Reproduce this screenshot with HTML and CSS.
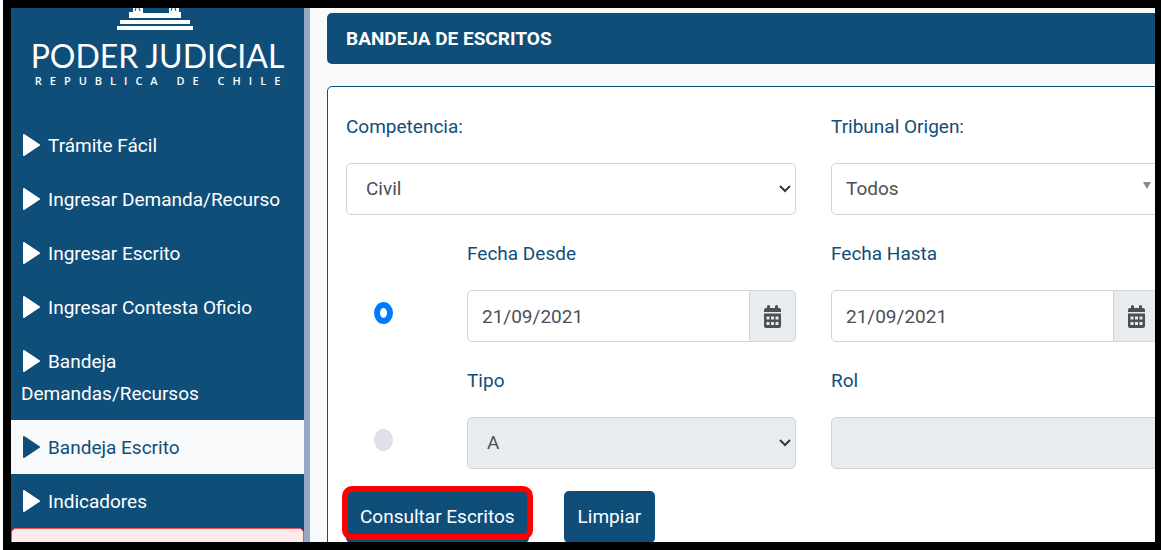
FILE: index.html
```html
<!DOCTYPE html>
<html lang="es">
<head>
    <meta charset="UTF-8">
    <meta name="viewport" content="width=device-width, initial-scale=1.0">
    <title>Bandeja de Escritos</title>
    <link rel="stylesheet" href="styles.css">
</head>
<body>
    <div class="frame">
        <aside class="sidebar">
            <div class="logo">
                <svg class="logo-building" viewBox="0 0 76 24" aria-hidden="true">
                    <path d="M16 0h10v5h26V0h10v4h2v6H12V4h4z" fill="#fff"/>
                    <path d="M19 0l-1 3M22 0l1 3M55 0l-1 3M58 0l1 3" stroke="#104e7a"/>
                    <path d="M3 12h70v4H3zM0 18h76v4H0z" fill="#fff"/>
                </svg>
                <div class="logo-name">PODER JUDICIAL</div>
                <div class="logo-country">REPUBLICA DE CHILE</div>
            </div>
            <nav class="menu">
                <a href="#"><svg class="arrow" viewBox="0 0 17 22"><path d="M1 1l15 10L1 21z"/></svg>Trámite Fácil</a>
                <a href="#"><svg class="arrow" viewBox="0 0 17 22"><path d="M1 1l15 10L1 21z"/></svg>Ingresar Demanda/Recurso</a>
                <a href="#"><svg class="arrow" viewBox="0 0 17 22"><path d="M1 1l15 10L1 21z"/></svg>Ingresar Escrito</a>
                <a href="#"><svg class="arrow" viewBox="0 0 17 22"><path d="M1 1l15 10L1 21z"/></svg>Ingresar Contesta Oficio</a>
                <a href="#"><svg class="arrow" viewBox="0 0 17 22"><path d="M1 1l15 10L1 21z"/></svg>Bandeja<br>Demandas/Recursos</a>
                <a href="#" class="active"><svg class="arrow" viewBox="0 0 17 22"><path d="M1 1l15 10L1 21z"/></svg>Bandeja Escrito</a>
                <a href="#"><svg class="arrow" viewBox="0 0 17 22"><path d="M1 1l15 10L1 21z"/></svg>Indicadores</a>
            </nav>
            <div class="alert"></div>
        </aside>

        <main class="content">
            <h1 class="title">BANDEJA DE ESCRITOS</h1>

            <form class="panel">
                <div class="field wide">
                    <label for="competencia">Competencia:</label>
                    <div class="select">
                        <select id="competencia">
                            <option>Civil</option>
                        </select>
                        <svg class="chevron" viewBox="0 0 12 8"><path d="M1 1l5 5 5-5"/></svg>
                    </div>
                </div>
                <div class="field">
                    <label for="tribunal">Tribunal Origen:</label>
                    <div class="select search">
                        <select id="tribunal">
                            <option>Todos</option>
                        </select>
                        <svg class="caret" viewBox="0 0 8 7"><path d="M0 0h8L4 7z"/></svg>
                    </div>
                </div>

                <input type="radio" name="filtro" class="radio" aria-label="Buscar por fecha" checked>
                <div class="field">
                    <label for="desde">Fecha Desde</label>
                    <div class="date">
                        <input type="text" id="desde" value="21/09/2021">
                        <button type="button" aria-label="Abrir calendario">
                            <svg class="calendar" viewBox="0 0 17 23">
                                <path d="M3 3V1.500a1 1 0 0 1 3 0V3h5V1.500a1 1 0 0 1 3 0V3h1q2 0 2 2v2H0V5q0-2 2-2zM0 8.500h17V21q0 2-2 2H2q-2 0-2-2z"/>
                                <path class="days" d="M2.500 11.500h3v3h-3zM7 11.500h3v3H7zM11.500 11.500h3v3h-3zM2.500 17h3v3h-3zM7 17h3v3H7zM11.500 17h3v3h-3z"/>
                            </svg>
                        </button>
                    </div>
                </div>
                <div class="field">
                    <label for="hasta">Fecha Hasta</label>
                    <div class="date">
                        <input type="text" id="hasta" value="21/09/2021">
                        <button type="button" aria-label="Abrir calendario">
                            <svg class="calendar" viewBox="0 0 17 23">
                                <path d="M3 3V1.500a1 1 0 0 1 3 0V3h5V1.500a1 1 0 0 1 3 0V3h1q2 0 2 2v2H0V5q0-2 2-2zM0 8.500h17V21q0 2-2 2H2q-2 0-2-2z"/>
                                <path class="days" d="M2.500 11.500h3v3h-3zM7 11.500h3v3H7zM11.500 11.500h3v3h-3zM2.500 17h3v3h-3zM7 17h3v3H7zM11.500 17h3v3h-3z"/>
                            </svg>
                        </button>
                    </div>
                </div>

                <input type="radio" name="filtro" class="radio" aria-label="Buscar por rol">
                <div class="field">
                    <label for="tipo">Tipo</label>
                    <div class="select">
                        <select id="tipo" disabled>
                            <option>A</option>
                        </select>
                        <svg class="chevron" viewBox="0 0 12 8"><path d="M1 1l5 5 5-5"/></svg>
                    </div>
                </div>
                <div class="field">
                    <label for="rol">Rol</label>
                    <input type="text" id="rol" disabled>
                </div>

                <div class="buttons">
                    <div class="highlight">
                        <button type="button" class="btn">Consultar Escritos</button>
                    </div>
                    <button type="reset" class="btn">Limpiar</button>
                </div>
            </form>
        </main>
    </div>
</body>
</html>
```
FILE: styles.css
```css
* {
    box-sizing: border-box;
}

body {
    margin: 0 0 0 3px;
    background: white;
    font-family: Roboto, sans-serif;
    font-size: 19px;
    line-height: 32px;
    color: #104e7a;
}

.frame {
    display: flex;
    height: 100vh;
    overflow: hidden;
    border: 8px solid black;
    border-right-width: 6px;
    background: #f8f9fb;
}

/* Sidebar */
.sidebar {
    flex: 0 0 299px;
    border-right: 6px solid #98a7c3;
    background: #104e7a;
}

.logo {
    display: flex;
    flex-direction: column;
    align-items: center;
    height: 110px;
    color: white;
}

.logo-building {
    width: 76px;
    height: 24px;
    margin-right: 5px;
}

.logo-name {
    margin-top: 8px;
    font-family: Lato, sans-serif;
    font-size: 32px;
    white-space: nowrap;
}

.logo-country {
    padding-left: 8px;
    font-family: "Open Sans", sans-serif;
    font-size: 11px;
    font-weight: 600;
    line-height: 18px;
    letter-spacing: 8px;
    white-space: nowrap;
}

.menu a {
    display: block;
    padding: 12px 10px 10px;
    color: white;
    text-decoration: none;
}

.menu a.active {
    background: #f8f9fb;
    color: #104e7a;
}

.arrow {
    width: 17px;
    height: 22px;
    margin: 0 8px 0 2px;
    vertical-align: -4px;
    fill: currentColor;
    stroke: currentColor;
    stroke-width: 2;
    stroke-linejoin: round;
}

.alert {
    height: 60px;
    border: 1px solid #f0525a;
    border-radius: 5px;
    background: #ffeaea;
}

/* Content runs past the right edge of the frame */
.content {
    flex: 1;
    margin-right: -24px;
    padding: 5px 0 0 17px;
}

.title {
    margin: 0 0 22px;
    padding: 10px 19px 9px;
    border-radius: 5px;
    background: #104e7a;
    color: white;
    font-size: 19px;
    font-weight: 700;
}

.panel {
    display: grid;
    grid-template-columns: 86px 1fr 1fr;
    gap: 22px 35px;
    padding: 23px 18px;
    border: 1px solid #104e7a;
    border-radius: 5px;
    background: white;
}

.wide {
    grid-column: span 2;
}

.field label {
    display: block;
    margin-bottom: 19px;
    line-height: 34px;
}

.select {
    position: relative;
}

select,
input[type="text"] {
    display: block;
    width: 100%;
    height: 52px;
    padding: 0 14px;
    appearance: none;
    border: 1px solid #ced4da;
    border-radius: 5px;
    background: white;
    color: #495057;
    font: inherit;
}

.select select {
    padding-left: 19px;
}

.search select {
    padding-left: 14px;
}

select:disabled,
input[type="text"]:disabled {
    background: #e9ecef;
    opacity: 1;
}

.chevron {
    position: absolute;
    top: 22px;
    right: 5px;
    width: 12px;
    height: 8px;
    fill: none;
    stroke: #343a40;
    stroke-width: 2;
}

.caret {
    position: absolute;
    top: 19px;
    right: 9px;
    width: 8px;
    height: 7px;
    fill: #888;
}

.date {
    display: flex;
}

.date input[type="text"] {
    flex: 1;
    min-width: 0;
    border-radius: 5px 0 0 5px;
}

.date button {
    display: flex;
    align-items: center;
    justify-content: center;
    width: 46px;
    border: 1px solid #ced4da;
    border-left: 0;
    border-radius: 0 5px 5px 0;
    background: #e9ecef;
}

.calendar {
    width: 17px;
    height: 23px;
    fill: #495057;
}

.days {
    fill: #e9ecef;
}

.radio {
    align-self: end;
    width: 19px;
    height: 22px;
    margin: 0 0 18px 28px;
    appearance: none;
    border-radius: 50%;
    background: #dee2e6;
}

.radio:checked {
    border: 6px solid #007bff;
    background: white;
}

.buttons {
    grid-column: 1 / -1;
    display: flex;
    gap: 35px;
}

.btn {
    height: 52px;
    padding: 0 14px;
    border: 0;
    border-radius: 5px;
    background: #104e7a;
    color: white;
    font: inherit;
}

.highlight {
    position: relative;
}

/* Red box drawn over the button */
.highlight::after {
    content: "";
    position: absolute;
    inset: -5px -4px 3px;
    border: 6px solid #ff0000;
    border-radius: 10px;
    pointer-events: none;
}
```
